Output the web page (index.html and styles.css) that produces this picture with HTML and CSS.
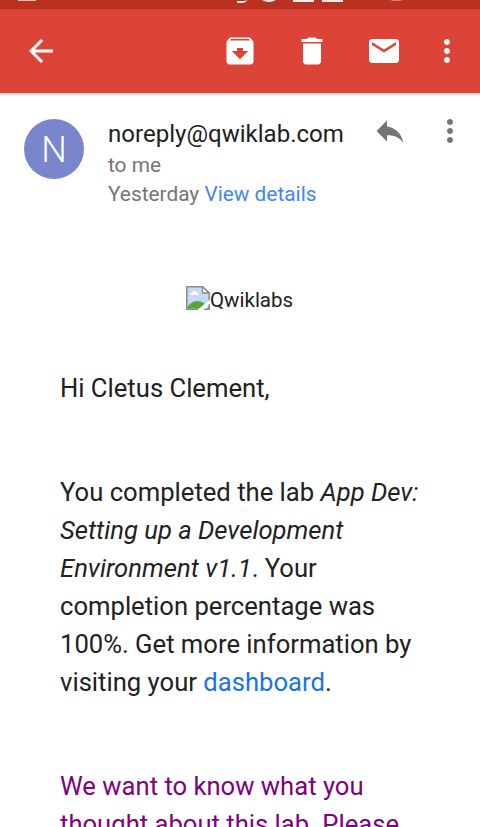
FILE: index.html
```html
<!DOCTYPE html>
<html lang="en">
<head>
<meta charset="utf-8">
<title>Mail</title>
<link rel="stylesheet" href="styles.css">
</head>
<body>
<svg class="status" viewBox="0 0 480 9" fill="#fff">
  <path opacity=".7" d="M18 0h18v1H18z"/>
  <path opacity=".9" d="M237 1h6q3 0 4-1h-2v0h2q-1 3-5 3h-5zM262 0h14q-3 2-7 2t-7-2zM293 0h21v2h-21zM322 0h21v2h-21z"/>
  <path opacity=".4" d="M390 0h13l-3 1h-7z"/>
</svg>
<header class="toolbar">
  <svg class="icon back" viewBox="0 0 24 24"><path d="M20 11H7.83l5.59-5.59L12 4l-8 8 8 8 1.41-1.41L7.83 13H20v-2z"/></svg>
  <div class="actions">
    <svg class="icon" viewBox="0 0 24 24"><path d="M20.54 5.23l-1.39-1.68C18.88 3.21 18.47 3 18 3H6c-.47 0-.88.21-1.16.55L3.46 5.23C3.17 5.57 3 6.02 3 6.5V19c0 1.1.9 2 2 2h14c1.1 0 2-.9 2-2V6.5c0-.48-.17-.93-.46-1.27zM12 17.5L6.5 12H10v-2h4v2h3.5L12 17.5zM5.12 5l.81-1h12l.94 1H5.12z"/></svg>
    <svg class="icon" viewBox="0 0 24 24"><path d="M6 19c0 1.1.9 2 2 2h8c1.1 0 2-.9 2-2V7H6v12zM19 4h-3.5l-1-1h-5l-1 1H5v2h14V4z"/></svg>
    <svg class="icon" viewBox="0 0 24 24"><path d="M20 4H4c-1.100 0-1.990.9-1.990 2L2 18c0 1.100.9 2 2 2h16c1.100 0 2-.9 2-2V6c0-1.100-.9-2-2-2zm0 4l-8 5-8-5V6l8 5 8-5v2z"/></svg>
  </div>
  <svg class="icon more" viewBox="0 0 24 24"><path d="M12 8c1.100 0 2-.9 2-2s-.9-2-2-2-2 .9-2 2 .9 2 2 2zm0 2c-1.100 0-2 .9-2 2s.9 2 2 2 2-.9 2-2-.9-2-2-2zm0 6c-1.100 0-2 .9-2 2s.9 2 2 2 2-.9 2-2-.9-2-2-2z"/></svg>
</header>
<section class="sender">
  <div class="avatar">N</div>
  <div class="details">
    <div class="from">noreply@qwiklab.com</div>
    <div class="meta">to me</div>
    <div class="meta">Yesterday <a class="view">View details</a></div>
  </div>
  <svg class="icon reply" viewBox="0 0 24 24"><path d="M10 9V5l-7 7 7 7v-4.100c5 0 8.500 1.600 11 5.100-1-5-4-10-11-11z"/></svg>
  <svg class="icon options" viewBox="0 0 24 24"><path d="M12 8c1.100 0 2-.9 2-2s-.9-2-2-2-2 .9-2 2 .9 2 2 2zm0 2c-1.100 0-2 .9-2 2s.9 2 2 2 2-.9 2-2-.9-2-2-2zm0 6c-1.100 0-2 .9-2 2s.9 2 2 2 2-.9 2-2-.9-2-2-2z"/></svg>
</section>
<main class="message">
  <div class="logo">
    <svg class="broken" viewBox="0 0 24 24">
      <path fill="#c5d8f5" stroke="#8b8b8b" stroke-width="1.500" d="M.8.8h15.700l6.700 6.200v16.200H.8z"/>
      <path fill="#fff" d="M4 9q0-2 2-2 1-3 3-2 2 0 2 2 2 0 2 2z"/>
      <path fill="#55a63b" d="M1.500 22.500v-2Q6 15 11 15q5 0 8 3l3 4.500z"/>
      <path fill="#fff" stroke="#8b8b8b" stroke-width="1.300" d="M16.500.8V7h6.700z"/>
      <path fill="#fff" d="M24 13.500V18l-5 6h-7.500z"/>
      <path fill="none" stroke="#8b8b8b" stroke-width="1.300" d="M23.300 18v5.300H18"/>
    </svg><span>Qwiklabs</span>
  </div>
  <p>Hi Cletus Clement,</p>
  <p>You completed the lab <i>App Dev:<br>Setting up a Development<br>Environment v1.1</i>. Your<br>completion percentage was<br>100%. Get more information by<br>visiting your <a class="dashboard">dashboard</a>.</p>
  <p class="survey">We want to know what you<br>thought about this lab. Please</p>
</main>
</body>
</html>
```
FILE: styles.css
```css
* { box-sizing: border-box; }
body {
  margin: 0;
  height: 827px;
  overflow: hidden;
  background: #fff;
  color: #212121;
  font-family: Roboto, sans-serif;
}
.status {
  display: block;
  width: 480px;
  height: 9px;
  background: #b93221;
}
.toolbar {
  display: flex;
  align-items: center;
  height: 86px;
  padding: 0 15px 0 23px;
  background: #db4437;
  border-bottom: 2px solid #f9dfdc;
}
.icon {
  display: block;
  flex: none;
  width: 36px;
  height: 36px;
  fill: #fff;
}
.actions {
  display: flex;
  gap: 36px;
  margin-left: auto;
}
.more { margin-left: 27px; }
.sender {
  display: flex;
  height: 155px;
  padding: 18px 12px 0 24px;
}
.avatar {
  flex: none;
  width: 60px;
  height: 60px;
  margin-top: 6px;
  border-radius: 50%;
  background: #7986cb;
  color: #fff;
  font-size: 36px;
  font-weight: 300;
  line-height: 62px;
  text-align: center;
}
.details {
  width: 264px;
  margin-left: 24px;
  white-space: nowrap;
}
.from {
  height: 38px;
  font-size: 24.050px;
  line-height: 42px;
}
.meta {
  color: #757575;
  font-size: 20.850px;
  line-height: 29px;
}
.view { color: #4285f4; }
.reply, .options { fill: #757575; }
.options { margin-left: 24px; }
.message {
  padding: 31px 0 0 60px;
  font-size: 25.640px;
  line-height: 38px;
  white-space: nowrap;
}
.logo {
  display: flex;
  align-items: center;
  height: 38px;
  margin-left: 126px;
  font-size: 20.500px;
}
.broken {
  width: 24px;
  height: 24px;
  margin-top: -4px;
}
.message p { margin: 0 0 66px; }
.message .logo + p { margin-top: 50px; }
.dashboard { color: #1a73e8; }
.survey { color: #800080; }
```
